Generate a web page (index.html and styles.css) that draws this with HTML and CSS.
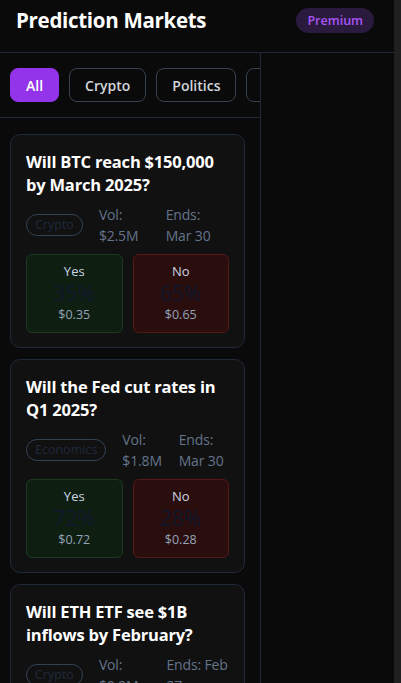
FILE: index.html
```html
<!DOCTYPE html>
<html lang="en">
<head>
<meta charset="utf-8">
<title>Prediction Markets</title>
<link rel="stylesheet" href="styles.css">
</head>
<body>
<div class="app">
  <header class="topbar">
    <h1 class="topbar-title">Prediction Markets</h1>
    <span class="badge">Premium</span>
  </header>
  <div class="layout">
    <aside class="sidebar">
      <nav class="filters">
        <button class="chip chip-active">All</button>
        <button class="chip">Crypto</button>
        <button class="chip">Politics</button>
        <button class="chip">Economics</button>
        <button class="chip">Sports</button>
      </nav>
      <div class="market-list">
        <article class="card">
          <h2 class="card-title">Will BTC reach $150,000 by March 2025?</h2>
          <div class="meta">
            <span class="tag">Crypto</span>
            <span class="meta-item">Vol: $2.5M</span>
            <span class="meta-item">Ends: Mar 30</span>
          </div>
          <div class="outcomes">
            <div class="outcome outcome-yes">
              <span class="outcome-label">Yes</span>
              <span class="outcome-pct">35%</span>
              <span class="outcome-price">$0.35</span>
            </div>
            <div class="outcome outcome-no">
              <span class="outcome-label">No</span>
              <span class="outcome-pct">65%</span>
              <span class="outcome-price">$0.65</span>
            </div>
          </div>
        </article>
        <article class="card">
          <h2 class="card-title">Will the Fed cut rates in Q1 2025?</h2>
          <div class="meta">
            <span class="tag">Economics</span>
            <span class="meta-item">Vol: $1.8M</span>
            <span class="meta-item">Ends: Mar 30</span>
          </div>
          <div class="outcomes">
            <div class="outcome outcome-yes">
              <span class="outcome-label">Yes</span>
              <span class="outcome-pct">72%</span>
              <span class="outcome-price">$0.72</span>
            </div>
            <div class="outcome outcome-no">
              <span class="outcome-label">No</span>
              <span class="outcome-pct">28%</span>
              <span class="outcome-price">$0.28</span>
            </div>
          </div>
        </article>
        <article class="card">
          <h2 class="card-title">Will ETH ETF see $1B inflows by February?</h2>
          <div class="meta">
            <span class="tag">Crypto</span>
            <span class="meta-item">Vol: $0.9M</span>
            <span class="meta-item">Ends: Feb 27</span>
          </div>
          <div class="outcomes">
            <div class="outcome outcome-yes">
              <span class="outcome-label">Yes</span>
              <span class="outcome-pct">41%</span>
              <span class="outcome-price">$0.41</span>
            </div>
            <div class="outcome outcome-no">
              <span class="outcome-label">No</span>
              <span class="outcome-pct">59%</span>
              <span class="outcome-price">$0.59</span>
            </div>
          </div>
        </article>
      </div>
    </aside>
    <main class="detail"></main>
  </div>
</div>
<div class="scroll-track" aria-hidden="true"></div>
</body>
</html>
```

FILE: styles.css
```css
html {
  background: #0a0a0a;
}
body {
  display: grid;
  grid-template-columns: minmax(0, 1fr) 7px;
  margin: 0;
  background: #0a0a0a;
  color: #ffffff;
  font-family: "Open Sans", "Noto Sans", "Liberation Sans", sans-serif;
}
.app {
  min-width: 0;
}
.scroll-track {
  background: #202020;
}
.topbar {
  display: flex;
  align-items: center;
  justify-content: space-between;
  height: 40px;
  padding: 0 20px 12px 16px;
  border-bottom: 1px solid #1f2937;
}
.topbar-title {
  margin: 0;
  font-size: 20.5px;
  font-weight: 700;
  letter-spacing: -0.3px;
}
.badge {
  padding: 3px 11px;
  border-radius: 999px;
  background: #2a1a3e;
  color: #a855f7;
  font-size: 12.5px;
  font-weight: 600;
  line-height: 19px;
}
.layout {
  display: grid;
  grid-template-columns: 261px 1fr;
}
.sidebar {
  border-right: 1px solid #1f2937;
  min-width: 0;
}
.filters {
  display: flex;
  gap: 10px;
  padding: 15px 10px;
  border-bottom: 1px solid #1f2937;
  overflow: hidden;
}
.chip {
  flex: none;
  height: 34px;
  padding: 0 15px;
  border: 1px solid #374151;
  border-radius: 8px;
  background: transparent;
  color: #d1d5db;
  font-family: inherit;
  font-size: 14px;
  font-weight: 600;
}
.chip-active {
  background: #9333ea;
  border-color: #9333ea;
  color: #ffffff;
}
.market-list {
  display: flex;
  flex-direction: column;
  gap: 11px;
  padding: 16px 15px 16px 10px;
}
.card {
  padding: 15px 15px 14px;
  background: #111111;
  border: 1px solid #1f2937;
  border-radius: 10px;
}
.card-title {
  margin: 0 0 8px;
  font-size: 16.5px;
  font-weight: 700;
  line-height: 23px;
  letter-spacing: -0.2px;
}
.meta {
  display: flex;
  align-items: center;
  gap: 16px;
  margin-bottom: 8px;
}
.tag {
  flex: none;
  padding: 1px 8px;
  border: 1px solid #334155;
  border-radius: 999px;
  color: #1e293b;
  font-size: 12.5px;
  line-height: 18px;
}
.meta-item {
  color: #64748b;
  font-size: 14px;
  line-height: 21px;
  letter-spacing: -0.15px;
}
.outcomes {
  display: grid;
  grid-template-columns: 1fr 1fr;
  gap: 10px;
}
.outcome {
  display: flex;
  flex-direction: column;
  align-items: center;
  padding: 7px 8px 8px;
  border-radius: 6px;
}
.outcome-yes {
  background: #0e1f12;
  border: 1px solid #1b3a20;
}
.outcome-no {
  background: #2a0d0d;
  border: 1px solid #571818;
}
.outcome-label {
  color: #cbd5e1;
  font-size: 13px;
  line-height: 18px;
}
.outcome-pct {
  margin-top: 1px;
  color: #0f172a;
  font-size: 21px;
  line-height: 24px;
}
.outcome-price {
  margin-top: 1px;
  color: #94a3b8;
  font-size: 12.5px;
  line-height: 18px;
}
```
